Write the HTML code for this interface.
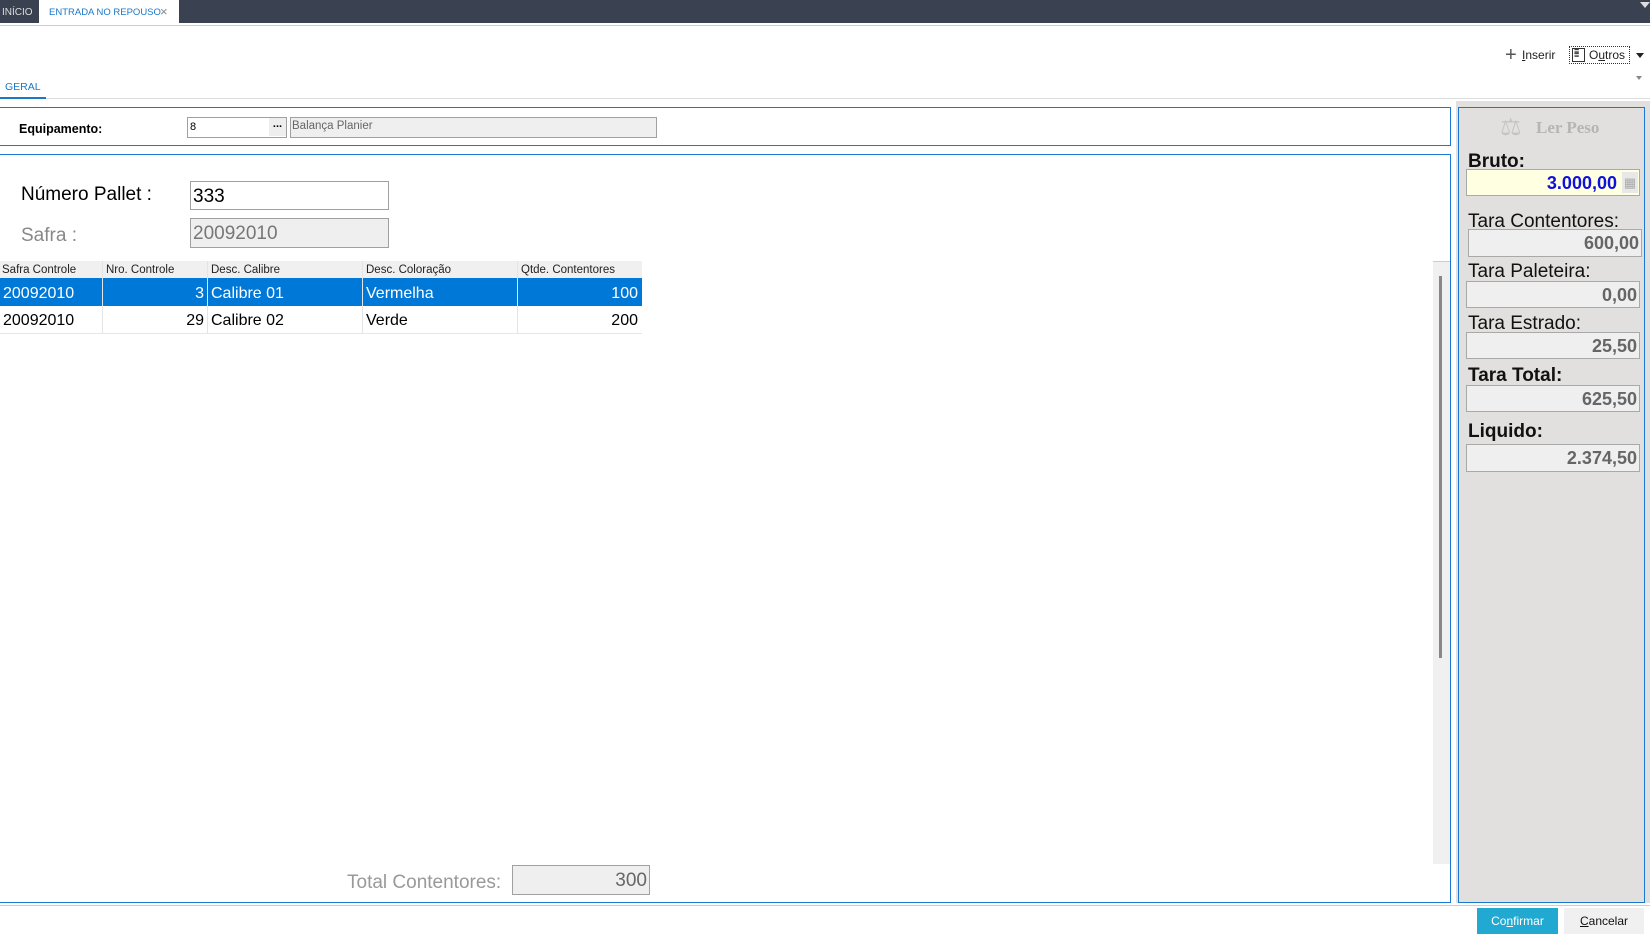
<!DOCTYPE html>
<html><head><meta charset="utf-8"><style>
*{box-sizing:border-box;margin:0;padding:0}
body{width:1650px;height:937px;position:relative;background:#fff;font-family:"Liberation Sans",sans-serif;overflow:hidden;color:#000}
.a{position:absolute}
.inp{position:absolute;border:1px solid #a0a0a0;background:#fff}
.ro{background:#efefef}
.rp{font-size:19px;color:#111}
.rv{position:absolute;border:1px solid #a9a9a9;background:#efefef;text-align:right;font-size:18px;color:#666;font-weight:bold;padding-right:2px;line-height:27px;font-family:"Liberation Sans Narrow","Liberation Sans",sans-serif}
.g{position:absolute;font-size:16px;line-height:28px;white-space:nowrap;padding:0 3px}
.h{position:absolute;font-size:11.5px;line-height:17px;top:262px;color:#222;padding-left:2px}
</style></head><body>
<div class="a" style="left:0;top:0;width:1650px;height:23px;background:#3a4150"></div>
<div class="a" style="left:2px;top:7px;font-size:10px;color:#ddd">INÍCIO</div>
<div class="a" style="left:39px;top:0;width:140px;height:23px;background:#fff"></div>
<div class="a" style="left:49px;top:7px;font-size:9.5px;color:#1a78c8;font-family:'Liberation Sans Narrow','Liberation Sans',sans-serif">ENTRADA NO REPOUSO</div>
<div class="a" style="left:160px;top:4px;font-size:13px;color:#888">×</div>
<div class="a" style="left:1640px;top:2px;width:0;height:0;border:5px solid transparent;border-top:6px solid #ddd"></div>
<div class="a" style="left:0;top:25px;width:1650px;height:1px;background:#ccc"></div>

<div class="a" style="left:1505px;top:46px;font-size:20px;color:#555;line-height:18px">+</div>
<div class="a" style="left:1522px;top:48px;font-size:12px;color:#222"><u>I</u>nserir</div>
<div class="a" style="left:1569px;top:46px;width:61px;height:18px;border:1px dotted #333"></div>
<div class="a" style="left:1572px;top:48px;width:13px;height:14px;border:1px solid #333;font-size:9px;line-height:4px;padding-left:1px">≡<br>≡</div>
<div class="a" style="left:1589px;top:48px;font-size:12px;color:#222">O<u>u</u>tros</div>
<div class="a" style="left:1636px;top:53px;width:0;height:0;border:4px solid transparent;border-top:5px solid #222"></div>
<div class="a" style="left:1636px;top:76px;width:0;height:0;border:3px solid transparent;border-top:4px solid #888"></div>

<div class="a" style="left:5px;top:81px;font-size:10.5px;color:#1a78c8">GERAL</div>
<div class="a" style="left:0;top:97px;width:46px;height:2px;background:#1a78c8"></div>
<div class="a" style="left:46px;top:98px;width:1604px;height:1px;background:#ddd"></div>

<div class="a" style="left:0;top:107px;width:1451px;height:39px;border:1px solid #1a78d0;border-left:none"></div>
<div class="a" style="left:19px;top:122px;font-size:12.5px;font-weight:bold">Equipamento:</div>
<div class="inp" style="left:187px;top:117px;width:100px;height:21px;font-size:11px;padding:3px 2px">8</div>
<div class="a" style="left:269px;top:118px;width:17px;height:18px;background:#eee;font-size:11px;font-weight:bold;text-align:center;line-height:12px">...</div>
<div class="inp ro" style="left:290px;top:117px;width:367px;height:21px;font-size:11.5px;color:#666;padding:2px 1px">Balança Planier</div>

<div class="a" style="left:0;top:154px;width:1451px;height:749px;border:1px solid #1a78d0;border-left:none"></div>
<div class="a" style="left:21px;top:184px;font-size:19px">Número Pallet :</div>
<div class="inp" style="left:190px;top:181px;width:199px;height:29px;font-size:19px;padding:4px 2px">333</div>
<div class="a" style="left:21px;top:225px;font-size:19px;color:#888">Safra :</div>
<div class="inp ro" style="left:190px;top:218px;width:199px;height:30px;font-size:19px;color:#777;padding:4px 2px">20092010</div>

<div class="a" style="left:0;top:261px;width:642px;height:17px;background:#f0f0f0"></div>
<div class="h" style="left:0">Safra Controle</div>
<div class="h" style="left:104px">Nro. Controle</div>
<div class="h" style="left:209px">Desc. Calibre</div>
<div class="h" style="left:364px">Desc. Coloração</div>
<div class="h" style="left:519px">Qtde. Contentores</div>
<div class="a" style="left:0;top:278px;width:642px;height:28px;background:#0078d7"></div>
<div class="a" style="left:0;top:306px;width:642px;height:28px;border-bottom:1px solid #e6e6e6"></div>
<div class="a" style="left:102px;top:261px;width:1px;height:73px;border-left:1px solid #e4e4e4"></div>
<div class="a" style="left:207px;top:261px;width:1px;height:73px;border-left:1px solid #e4e4e4"></div>
<div class="a" style="left:362px;top:261px;width:1px;height:73px;border-left:1px solid #e4e4e4"></div>
<div class="a" style="left:517px;top:261px;width:1px;height:73px;border-left:1px solid #e4e4e4"></div>
<div class="g" style="left:0;top:280px;color:#fff">20092010</div>
<div class="g" style="left:103px;top:280px;width:104px;text-align:right;color:#fff">3</div>
<div class="g" style="left:208px;top:280px;color:#fff">Calibre 01</div>
<div class="g" style="left:363px;top:280px;color:#fff">Vermelha</div>
<div class="g" style="left:518px;top:280px;width:123px;text-align:right;color:#fff">100</div>
<div class="g" style="left:0;top:307px">20092010</div>
<div class="g" style="left:103px;top:307px;width:104px;text-align:right">29</div>
<div class="g" style="left:208px;top:307px">Calibre 02</div>
<div class="g" style="left:363px;top:307px">Verde</div>
<div class="g" style="left:518px;top:307px;width:123px;text-align:right">200</div>

<div class="a" style="left:1433px;top:261px;width:17px;height:603px;background:#f0f0f0;border-top:1px solid #ccc"></div>
<div class="a" style="left:1439px;top:276px;width:3px;height:382px;background:#888"></div>

<div class="a" style="left:347px;top:872px;font-size:19px;color:#999">Total Contentores:</div>
<div class="inp ro" style="left:512px;top:865px;width:138px;height:30px;font-size:19px;color:#666;text-align:right;padding:4px 2px">300</div>

<div class="a" style="left:0;top:905px;width:1650px;height:1px;background:#ccc"></div>
<div class="a" style="left:1477px;top:908px;width:81px;height:26px;background:#22a9d2;color:#fff;font-size:12px;text-align:center;line-height:26px">Co<u>n</u>firmar</div>
<div class="a" style="left:1564px;top:908px;width:80px;height:26px;background:#f0f0f0;color:#111;font-size:12px;text-align:center;line-height:26px"><u>C</u>ancelar</div>

<div class="a" style="left:1456px;top:101px;width:194px;height:802px;background:#e1e0de"></div>
<div class="a" style="left:1458px;top:107px;width:187px;height:796px;border:1px solid #1a78d0"></div>
<div class="a" style="left:1500px;top:113px;width:28px;height:30px;color:#c4c4c4;font-size:24px">⚖</div>
<div class="a" style="left:1536px;top:118px;font-size:17px;font-weight:bold;color:#b5b5b5;font-family:'Liberation Serif',serif">Ler Peso</div>
<div class="a rp" style="left:1468px;top:151px;font-weight:bold">Bruto:</div>
<div class="rv" style="left:1466px;top:169px;width:174px;height:27px;background:#ffffe1;color:#1010e0;padding-right:22px">3.000,00</div>
<div class="a" style="left:1622px;top:172px;width:16px;height:21px;background:#e8e8e8;color:#aaa;font-size:13px;text-align:center;line-height:21px">▦</div>
<div class="a rp" style="left:1468px;top:211px">Tara Contentores:</div>
<div class="rv" style="left:1468px;top:229px;width:174px;height:28px">600,00</div>
<div class="a rp" style="left:1468px;top:261px">Tara Paleteira:</div>
<div class="rv" style="left:1466px;top:281px;width:174px;height:27px">0,00</div>
<div class="a rp" style="left:1468px;top:313px">Tara Estrado:</div>
<div class="rv" style="left:1466px;top:332px;width:174px;height:27px">25,50</div>
<div class="a rp" style="left:1468px;top:365px;font-weight:bold">Tara Total:</div>
<div class="rv" style="left:1466px;top:385px;width:174px;height:27px">625,50</div>
<div class="a rp" style="left:1468px;top:421px;font-weight:bold">Liquido:</div>
<div class="rv" style="left:1466px;top:444px;width:174px;height:28px">2.374,50</div>
</body></html>
